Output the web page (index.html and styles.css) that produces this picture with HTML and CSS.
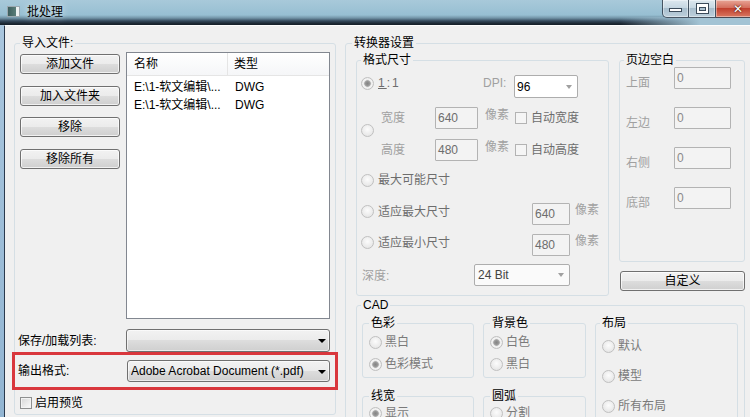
FILE: index.html
```html
<!DOCTYPE html>
<html lang="zh-CN">
<head>
  <meta charset="UTF-8" />
  <title>批处理</title>
  <link rel="stylesheet" href="styles.css">
</head>

<body>

  <div class="window">

    <!-- title bar -->
    <div class="titlebar">
      <span class="app-icon"></span>
      <span class="title">批处理</span>
      <div class="caption">
        <span class="cap-btn cap-min"><i></i></span>
        <span class="cap-btn cap-max"><i></i></span>
        <span class="cap-btn cap-close">✕</span>
      </div>
    </div>

    <div class="frame">
      <div class="client">

        <!-- 导入文件 -->
        <fieldset class="group import">
          <legend>导入文件:</legend>
          <div class="import-body">
            <div class="btn-col">
              <div class="btn">添加文件</div>
              <div class="btn">加入文件夹</div>
              <div class="btn">移除</div>
              <div class="btn">移除所有</div>
            </div>
            <div class="listview">
              <div class="lv-head">
                <span class="col-name">名称</span>
                <span class="col-type">类型</span>
              </div>
              <div class="lv-rows">
                <div class="lv-row"><span class="col-name">E:\1-软文编辑\...</span><span class="col-type">DWG</span></div>
                <div class="lv-row"><span class="col-name">E:\1-软文编辑\...</span><span class="col-type">DWG</span></div>
              </div>
            </div>
          </div>

          <div class="form-row save-row">
            <span class="row-label">保存/加载列表:</span>
            <div class="combo"><span class="combo-text"></span><span class="arrow"></span></div>
          </div>

          <div class="form-row output-row">
            <span class="row-label">输出格式:</span>
            <div class="combo"><span class="combo-text">Adobe Acrobat Document (*.pdf)</span><span class="arrow"></span></div>
          </div>

          <div class="check-row">
            <span class="checkbox"></span>
            <span>启用预览</span>
          </div>
        </fieldset>

        <!-- 转换器设置 -->
        <fieldset class="group converter">
          <legend>转换器设置</legend>

          <div class="conv-top">
            <fieldset class="group size">
              <legend>格式尺寸</legend>

              <div class="size-row1">
                <span class="radio-opt one"><span class="radio checked"></span><span class="ratio"><u>1</u>:1</span></span>
                <span class="lbl-off dpi">DPI:</span>
                <div class="combo-off dpi-combo"><span>96</span><span class="arrow-off"></span></div>
              </div>

              <div class="wh-block">
                <span class="radio"></span>
                <div class="wh-rows">
                  <div class="wh-row">
                    <span class="lbl-off wh-label">宽度</span>
                    <span class="edit-off">640</span>
                    <span class="unit">像素</span>
                    <span class="check-off"></span>
                    <span class="check-text">自动宽度</span>
                  </div>
                  <div class="wh-row">
                    <span class="lbl-off wh-label">高度</span>
                    <span class="edit-off">480</span>
                    <span class="unit">像素</span>
                    <span class="check-off"></span>
                    <span class="check-text">自动高度</span>
                  </div>
                </div>
              </div>

              <div class="opt-row r-max">
                <span class="radio-opt"><span class="radio"></span>最大可能尺寸</span>
              </div>

              <div class="opt-row fit r-fitmax">
                <span class="radio-opt"><span class="radio"></span>适应最大尺寸</span>
                <span class="edit-off">640</span>
                <span class="unit">像素</span>
              </div>

              <div class="opt-row fit r-fitmin">
                <span class="radio-opt"><span class="radio"></span>适应最小尺寸</span>
                <span class="edit-off">480</span>
                <span class="unit">像素</span>
              </div>

              <div class="opt-row r-depth">
                <span class="lbl-off depth-label">深度:</span>
                <div class="combo-off depth-combo"><span>24 Bit</span><span class="arrow-off"></span></div>
              </div>
            </fieldset>

            <div class="margin-col">
              <fieldset class="group margins">
                <legend>页边空白</legend>
                <div class="margin-grid">
                  <span class="lbl-off">上面</span><span class="edit-off m">0</span>
                  <span class="lbl-off">左边</span><span class="edit-off m">0</span>
                  <span class="lbl-off">右侧</span><span class="edit-off m">0</span>
                  <span class="lbl-off">底部</span><span class="edit-off m">0</span>
                </div>
              </fieldset>
              <div class="btn custom">自定义</div>
            </div>
          </div>

          <fieldset class="group cad">
            <legend>CAD</legend>
            <div class="cad-grid">
              <fieldset class="group sub">
                <legend>色彩</legend>
                <div class="opt"><span class="radio"></span>黑白</div>
                <div class="opt"><span class="radio checked"></span>色彩模式</div>
              </fieldset>
              <fieldset class="group sub">
                <legend>背景色</legend>
                <div class="opt"><span class="radio checked"></span>白色</div>
                <div class="opt"><span class="radio"></span>黑白</div>
              </fieldset>
              <fieldset class="group sub layout">
                <legend>布局</legend>
                <div class="opt"><span class="radio"></span>默认</div>
                <div class="opt"><span class="radio"></span>模型</div>
                <div class="opt"><span class="radio"></span>所有布局</div>
              </fieldset>
              <fieldset class="group sub low">
                <legend>线宽</legend>
                <div class="opt"><span class="radio checked"></span>显示</div>
              </fieldset>
              <fieldset class="group sub low">
                <legend>圆弧</legend>
                <div class="opt"><span class="radio"></span>分割</div>
              </fieldset>
            </div>
          </fieldset>
        </fieldset>

      </div>
    </div>
  </div>

</body>
</html>
```

FILE: styles.css
```css
* {
  box-sizing: border-box;
}

html, body {
  margin: 0;
  padding: 0;
}

body {
  width: 750px;
  height: 417px;
  overflow: hidden;
  background: #f0f0f0;
  color: #000;
  font-family: "Liberation Sans", "Noto Sans CJK SC", sans-serif;
  font-size: 12px;
  line-height: 16px;
}

.window {
  width: 750px;
  height: 417px;
  display: flex;
  flex-direction: column;
}

/* ---------- title bar ---------- */

.titlebar {
  flex: none;
  height: 25px;
  display: flex;
  align-items: flex-start;
  overflow: hidden;
  background:
    linear-gradient(to right, rgba(160, 195, 212, 0) 620px, #a2c3d4 700px) 0 100% / 100% 8px no-repeat,
    linear-gradient(to bottom, #a8c9da 0, #97bfd2 15px, #7294a7 18px, #34485b 21px, #17212b 24px, #17212b 25px);
}

.app-icon {
  flex: none;
  width: 13px;
  height: 11px;
  margin: 6px 0 0 7px;
  border: 1px solid #9aa8b0;
  background: linear-gradient(to right, #3d5e5e 0, #5a7d79 8px, #edf1f2 8px);
}

.title {
  margin: 4px 0 0 7px;
  text-shadow: 0 0 7px rgba(255, 255, 255, 0.9);
}

.caption {
  flex: none;
  display: flex;
  margin-left: auto;
  margin-right: -9px;
}

.cap-btn {
  height: 18px;
  display: flex;
  align-items: center;
  justify-content: center;
  border: 1px solid rgba(35, 50, 65, 0.8);
  border-top: none;
  border-left: none;
  box-shadow: inset 0 0 0 1px rgba(255, 255, 255, 0.4);
}

.cap-min,
.cap-max {
  width: 27px;
  background: linear-gradient(to bottom, #dde8ef 0, #c6d7e2 45%, #a8becd 50%, #bdd0dc 100%);
}

.cap-min {
  border-left: 1px solid rgba(35, 50, 65, 0.8);
  border-bottom-left-radius: 5px;
}

.cap-min i {
  width: 13px;
  height: 4px;
  margin-top: 3px;
  background: #fff;
  border: 1px solid #3b4b5a;
}

.cap-max i {
  width: 11px;
  height: 9px;
  border: 2px solid #fff;
  border-top-width: 3px;
  box-shadow: 0 0 0 1px #3b4b5a, inset 0 0 0 1px #3b4b5a;
}

.cap-close {
  width: 43px;
  justify-content: flex-start;
  padding-left: 17px;
  border-bottom-right-radius: 5px;
  background: linear-gradient(to bottom, #e8a596 0, #d46f5e 45%, #c1412f 50%, #d97760 100%);
  color: #fff;
  font-family: "DejaVu Sans", sans-serif;
  font-size: 12px;
  font-weight: bold;
  text-shadow: 0 0 2px #4a1208, 0 0 1px #4a1208;
}

/* ---------- window frame ---------- */

.frame {
  flex: 1;
  min-height: 0;
  display: flex;
  padding-left: 4px;
  background: linear-gradient(to bottom, #a9c6de, #92b5d2);
}

.client {
  flex: 1;
  min-width: 0;
  display: flex;
  align-items: flex-start;
  padding: 9px 0 0 9px;
  background: #f0f0f0;
  border-left: 1px solid #2a3a4e;
  border-top: 1px solid #fdfdfd;
  overflow: hidden;
}

/* ---------- group boxes ---------- */

.group {
  margin: 0;
  padding: 0;
  min-width: 0;
  border: 1px solid #d5dfe5;
  border-radius: 3px;
}

.group > legend {
  padding: 0 2px;
  line-height: 16px;
}

/* ---------- left: import ---------- */

.import {
  flex: none;
  width: 322px;
  height: 380px;
  padding: 1px 5px 0;
}

.import-body {
  display: flex;
  height: 267px;
}

.btn-col {
  flex: none;
  width: 100px;
  display: flex;
  flex-direction: column;
  gap: 11.5px;
  padding-top: 2px;
}

.btn {
  height: 20px;
  line-height: 18px;
  text-align: center;
  color: #000;
  border: 1px solid #707070;
  border-radius: 3px;
  background: linear-gradient(to bottom, #f2f2f2 0, #ebebeb 50%, #dddddd 50%, #cfcfcf 100%);
  box-shadow: inset 0 0 0 1px rgba(255, 255, 255, 0.7);
}

.listview {
  flex: none;
  width: 204px;
  margin-left: 6px;
  border: 1px solid #828790;
  background: #fff;
}

.lv-head {
  display: flex;
  height: 23px;
  line-height: 22px;
  border-bottom: 1px solid #e5e5e5;
  background: linear-gradient(to bottom, #fff, #f5f6f8);
}

.col-name {
  flex: none;
  width: 101px;
  padding-left: 7px;
  white-space: nowrap;
}

.lv-head .col-name {
  border-right: 1px solid #e5e5e5;
}

.col-type {
  padding-left: 6px;
}

.lv-rows {
  padding-top: 2px;
}

.lv-row {
  display: flex;
  height: 18px;
  line-height: 18px;
}

.lv-row .col-type {
  padding-left: 7px;
}

.form-row {
  display: flex;
  align-items: center;
}

.row-label {
  flex: none;
}

.save-row {
  height: 23px;
  margin: 10px 0 0 -2px;
}

.save-row .row-label {
  width: 108px;
}

.save-row .combo {
  width: 204px;
  height: 23px;
}

.output-row {
  height: 38px;
  margin: 0 -8px;
  padding: 0 5px 0 3px;
  border: 3px solid #d9373d;
}

.output-row .row-label {
  width: 109px;
}

.output-row .combo {
  width: 203px;
  height: 22px;
}

.combo {
  display: flex;
  align-items: center;
  padding: 0 3px 0 3px;
  border: 1px solid #707070;
  border-radius: 3px;
  background: linear-gradient(to bottom, #f2f2f2 0, #ebebeb 50%, #dddddd 50%, #cfcfcf 100%);
  box-shadow: inset 0 0 0 1px rgba(255, 255, 255, 0.6);
}

.combo-text {
  flex: 1;
  white-space: nowrap;
  overflow: hidden;
}

.arrow {
  flex: none;
  width: 0;
  height: 0;
  margin-top: 1px;
  border-left: 4px solid transparent;
  border-right: 4px solid transparent;
  border-top: 4px solid #000;
}

.check-row {
  display: flex;
  align-items: center;
  height: 13px;
  margin-top: 6px;
}

.checkbox {
  flex: none;
  width: 12px;
  height: 12px;
  margin-right: 3px;
  border: 1px solid #8e8f8f;
  background: linear-gradient(135deg, #d6d6d6, #fbfbfb);
  box-shadow: inset 0 0 0 1px #f3f3f3;
}

/* ---------- right: converter ---------- */

.converter {
  flex: none;
  width: 420px;
  height: 400px;
  margin-left: 9px;
  padding: 1px 0 0 10px;
}

.converter > legend {
  margin-left: -4px;
}

.conv-top {
  display: flex;
  align-items: flex-start;
}

.size {
  flex: none;
  width: 253px;
  height: 244px;
  padding: 0 4px;
}

.radio-opt {
  flex: none;
  display: flex;
  align-items: center;
  color: #6d6d6d;
}

.radio {
  flex: none;
  width: 13px;
  height: 13px;
  margin-right: 4px;
  border: 1px solid #c0c0c0;
  border-radius: 50%;
  background: radial-gradient(circle at 50% 40%, #fcfcfc, #e0e0e0);
}

.radio.checked {
  background: radial-gradient(circle, #858585 0, #959595 2px, #b0b0b0 3px, #e4e4e4 3.6px, #f7f7f7 4.5px, #e2e2e2 6px);
}

.lbl-off {
  flex: none;
  color: #a0a0a0;
}

.unit {
  flex: none;
  color: #a0a0a0;
}

.size-row1 {
  display: flex;
  align-items: flex-start;
  height: 23px;
  margin-top: 7px;
}

.one {
  width: 122px;
}

.ratio {
  letter-spacing: 2px;
}

.dpi {
  width: 31px;
}

.combo-off {
  flex: none;
  display: flex;
  align-items: center;
  padding: 0 5px 0 2px;
  border: 1px solid #adadad;
  border-radius: 2px;
  background: #fff;
}

.dpi-combo {
  width: 64px;
  height: 23px;
}

.arrow-off {
  width: 0;
  height: 0;
  margin-left: auto;
  border-left: 3.5px solid transparent;
  border-right: 3.5px solid transparent;
  border-top: 4px solid #a0a0a0;
}

.edit-off {
  flex: none;
  width: 43px;
  height: 22px;
  padding-left: 2px;
  line-height: 20px;
  color: #6d6d6d;
  border: 1px solid #b3b3b3;
  border-radius: 1px;
  background: #f3f3f3;
}

.wh-block {
  display: flex;
  height: 54px;
  margin-top: 9px;
}

.wh-block > .radio {
  margin: 17px 0 0 0;
}

.wh-rows {
  display: flex;
  flex-direction: column;
  gap: 10px;
  margin-left: 7px;
}

.wh-row {
  display: flex;
  align-items: center;
  height: 22px;
}

.wh-label {
  width: 54px;
}

.wh-row .unit {
  margin: -6px 0 0 7px;
}

.check-off {
  flex: none;
  width: 12px;
  height: 12px;
  margin-left: 6px;
  border: 1px solid #b3b3b3;
  background: #f5f5f5;
}

.check-text {
  margin-left: 4px;
  color: #6d6d6d;
}

.opt-row {
  display: flex;
  align-items: center;
  height: 22px;
}

.r-max {
  margin-top: 8px;
}

.r-fitmax {
  margin-top: 12px;
}

.r-fitmin {
  margin-top: 9px;
}

.r-depth {
  margin-top: 8px;
}

.fit .radio-opt {
  width: 171px;
  margin-top: -5px;
}

.fit .edit-off {
  width: 38px;
}

.fit .unit {
  margin: -8px 0 0 5px;
}

.depth-label {
  width: 113px;
  padding-left: 1px;
  margin-top: 2px;
}

.depth-combo {
  width: 96px;
  height: 22px;
  padding-left: 3px;
  color: #444;
  background: #fafafa;
}

/* page margins */

.margin-col {
  flex: none;
  width: 126px;
  margin-left: 10px;
}

.margins {
  width: 126px;
  height: 210px;
  padding: 0 4px;
}

.margin-grid {
  display: grid;
  grid-template-columns: 48px 57px;
  grid-auto-rows: 22px;
  row-gap: 18px;
  margin-top: -1px;
  padding-left: 2px;
}

.margin-grid .lbl-off {
  align-self: end;
  margin-bottom: -2px;
}

.edit-off.m {
  width: 57px;
  padding: 2px 2px 0;
  line-height: 16px;
  color: #8a8a8a;
}

.custom {
  width: 125px;
  margin: 9px 0 0 1px;
}

/* CAD */

.cad {
  width: 389px;
  height: 140px;
  margin-top: 1px;
  padding: 0 5px;
}

.cad > legend {
  margin-left: -1px;
}

.cad-grid {
  display: grid;
  grid-template-columns: 112px 103px 143px;
  grid-template-rows: 63px 60px;
  column-gap: 9px;
  row-gap: 10px;
  margin-top: 2px;
}

.sub {
  padding: 0 6px;
}

.sub .opt {
  display: flex;
  align-items: center;
  height: 22px;
  color: #7a7a7a;
}

.sub .radio {
  margin-right: 3px;
}

.low .opt {
  height: 18px;
}

.layout {
  grid-column: 3;
  grid-row: 1 / span 2;
}

.layout > legend {
  margin-left: -2px;
}

.layout .opt {
  height: 30px;
}
```
